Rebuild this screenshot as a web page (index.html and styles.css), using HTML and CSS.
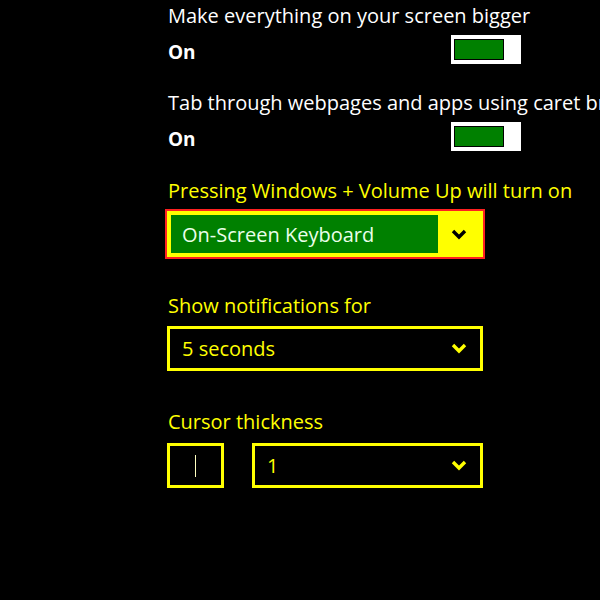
FILE: index.html
```html
<!DOCTYPE html>
<html lang="en">
<head>
    <meta charset="UTF-8">
    <title>Ease of Access</title>
    <link rel="stylesheet" href="styles.css">
</head>
<body>
  <div class="settings">
    <div class="label white first">Make everything on your screen bigger</div>
    <div class="switch_row">
      <span class="state">On</span>
      <span class="toggle"><span class="knob"></span></span>
    </div>

    <div class="label white second">Tab through webpages and apps using caret browsing</div>
    <div class="switch_row">
      <span class="state">On</span>
      <span class="toggle"><span class="knob"></span></span>
    </div>

    <div class="label third">Pressing Windows + Volume Up will turn on</div>
    <div class="dropdown focused">
      <span class="value">On-Screen Keyboard</span>
      <span class="arrow">
        <svg width="16" height="11" viewBox="0 0 16 11"><path d="M2 2 L8 8 L14 2" fill="none" stroke="#000" stroke-width="3.4"/></svg>
      </span>
    </div>

    <div class="label fourth">Show notifications for</div>
    <div class="dropdown">
      <span class="value">5 seconds</span>
      <span class="arrow">
        <svg width="16" height="11" viewBox="0 0 16 11"><path d="M2 2 L8 8 L14 2" fill="none" stroke="#ffff00" stroke-width="3.4"/></svg>
      </span>
    </div>

    <div class="label fifth">Cursor thickness</div>
    <div class="cursor_row">
      <div class="preview"><span class="caret"></span></div>
      <div class="dropdown small">
        <span class="value">1</span>
        <span class="arrow">
          <svg width="16" height="11" viewBox="0 0 16 11"><path d="M2 2 L8 8 L14 2" fill="none" stroke="#ffff00" stroke-width="3.4"/></svg>
        </span>
      </div>
    </div>
  </div>
</body>
</html>
```

FILE: styles.css
```css
body{
  margin: 0;
  background-color: #000;
  font-family: "Open Sans", "Noto Sans", sans-serif;
  overflow: hidden;
}

.settings{
  padding-left: 168px;
  width: 432px;
  overflow: hidden;
}

.label{
  font-size: 20px;
  line-height: 28px;
  height: 28px;
  color: #ffff00;
  white-space: nowrap;
}

.white{
  color: #fff;
}

.first{ padding-top: 2px; }
.second{ margin-top: 25px; }
.third{ margin-top: 26px; }
.fourth{ margin-top: 35px; }
.fifth{ margin-top: 37px; }

.switch_row{
  display: flex;
  align-items: center;
  justify-content: space-between;
  width: 353px;
  height: 29px;
  margin-top: 5px;
}

.state{
  color: #fff;
  font-weight: bold;
  font-size: 19px;
  padding-top: 4px;
}

.toggle{
  display: flex;
  align-items: center;
  box-sizing: border-box;
  width: 70px;
  height: 29px;
  background-color: #fff;
  padding-left: 3px;
}

.knob{
  box-sizing: border-box;
  width: 50px;
  height: 21px;
  background-color: #008000;
  border: 1px solid #000;
}

.dropdown{
  display: flex;
  align-items: stretch;
  box-sizing: border-box;
  width: 316px;
  height: 45px;
  margin-top: 6px;
  margin-left: -1px;
  border: 3px solid #ffff00;
  color: #ffff00;
  font-size: 20px;
}

.dropdown .value{
  flex: 1;
  display: flex;
  align-items: center;
  padding-left: 12px;
}

.dropdown .arrow{
  display: flex;
  align-items: center;
  justify-content: center;
  width: 42px;
}

.dropdown.focused{
  height: 46px;
  margin-top: 6px;
  outline: 2px solid #ff2020;
  background-color: #ffff00;
  padding: 1px 0 1px 1px;
}

.focused .value{
  background-color: #008000;
  color: #eaffea;
  padding-left: 11px;
}

.cursor_row{
  display: flex;
  gap: 28px;
  margin-top: 7px;
}

.preview{
  display: flex;
  align-items: center;
  justify-content: center;
  box-sizing: border-box;
  width: 57px;
  height: 45px;
  margin-left: -1px;
  border: 3px solid #ffff00;
}

.caret{
  width: 1px;
  height: 22px;
  background-color: #ffffc0;
}

.dropdown.small{
  width: 231px;
  margin: 0;
}
```
